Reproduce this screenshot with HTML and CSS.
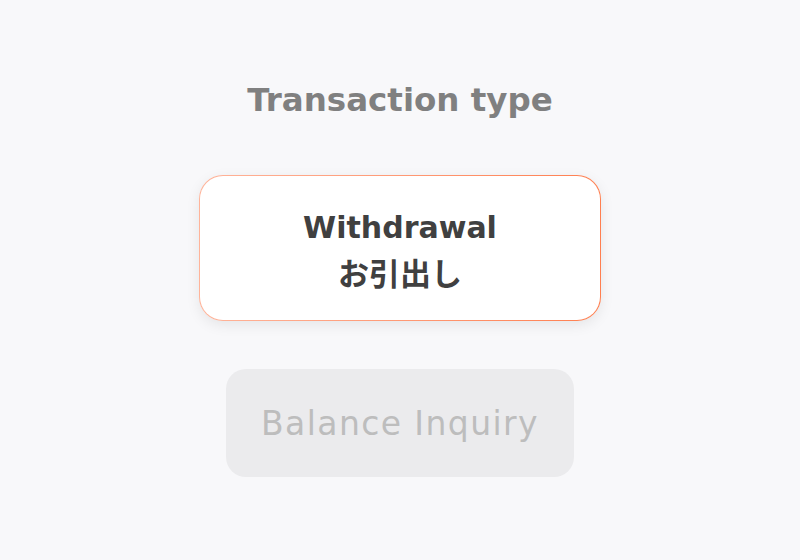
FILE: index.html
```html
<!DOCTYPE html>
<html lang="en">
<head>
    <meta charset="UTF-8">
    <meta name="viewport" content="width=device-width, initial-scale=1.0">
    <title>Transaction type</title>
    <link rel="stylesheet" href="styles.css">
</head>
<body>
    <main>
        <h1 class="title">Transaction type</h1>
        <div class="options">
            <button class="option selected">
                <span class="en">Withdrawal</span>
                <span class="ja" lang="ja">お引出し</span>
            </button>
            <button class="option disabled" disabled>Balance Inquiry</button>
        </div>
    </main>
</body>
</html>
```

FILE: styles.css
```css
* {
    margin: 0;
    padding: 0;
    box-sizing: border-box;
    font-family: 'DejaVu Sans', 'Noto Sans CJK JP', sans-serif;
}

html, body {
    width: 100%;
    height: 100%;
    background-color: #f8f8fa;
}

main {
    display: flex;
    flex-direction: column;
    align-items: center;
    padding-top: 78px;
}

.title {
    color: #808080;
    font-size: 32.5px;
    font-weight: 700;
    line-height: 44px;
}

.options {
    display: flex;
    flex-direction: column;
    align-items: center;
    gap: 48px;
    margin-top: 53px;
}

.option {
    border: none;
    cursor: pointer;
}

.selected {
    width: 402px;
    height: 146px;
    display: flex;
    flex-direction: column;
    align-items: center;
    justify-content: center;
    border: 1px solid transparent;
    border-radius: 24px;
    background: linear-gradient(#ffffff, #ffffff) padding-box,
                linear-gradient(90deg, #ffb49a, #ff7f50) border-box;
    box-shadow: 0 4px 14px rgba(0, 0, 0, 0.08);
    color: #404040;
    font-weight: 700;
}

.selected .en {
    font-size: 30px;
    line-height: 48px;
}

.selected .ja {
    font-size: 31px;
    line-height: 40px;
    font-family: 'Noto Sans CJK JP', sans-serif;
}

.disabled {
    width: 348px;
    height: 108px;
    border-radius: 20px;
    background-color: #ebebed;
    color: #bdbdbd;
    font-size: 33px;
    font-weight: 400;
    letter-spacing: 1.4px;
    cursor: default;
}
```
